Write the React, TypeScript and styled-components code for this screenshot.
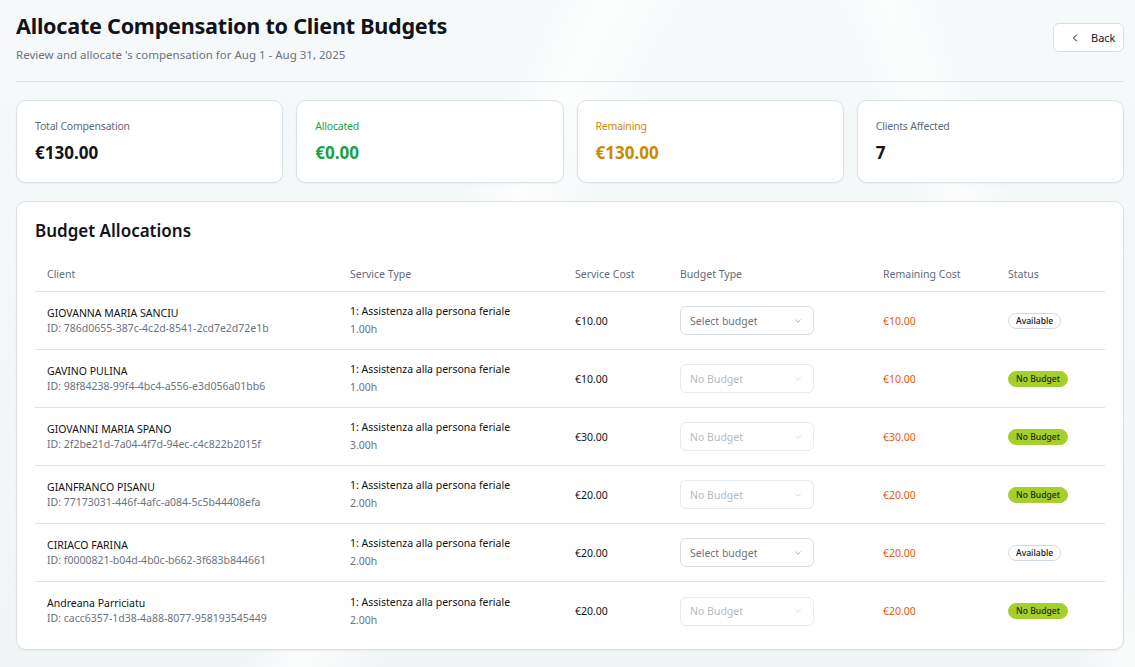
import React from "react";
import styled, { createGlobalStyle } from "styled-components";

const Global = createGlobalStyle`
  * { box-sizing: border-box; }
  html, body { margin: 0; padding: 0; }
  body {
    font-family: "Noto Sans", "Open Sans", sans-serif;
    color: #111827;
    background: #f3f6f7;
  }
`;

const Page = styled.div`
  min-height: 667px;
  padding: 11px 11px 18px 16px;
  background:
    linear-gradient(115deg, transparent 0%, transparent 38%, rgba(255,255,255,0.7) 42%, transparent 48%),
    linear-gradient(70deg, transparent 0%, transparent 78%, rgba(255,255,255,0.6) 82%, transparent 86%),
    linear-gradient(180deg, #f6f9fa 0%, #f1f5f6 100%);
`;

const Header = styled.header`
  display: flex;
  justify-content: space-between;
  align-items: center;
  padding-bottom: 17px;
  border-bottom: 1px solid #dde3e7;
`;

const TitleBlock = styled.div`
  display: flex;
  flex-direction: column;
  gap: 5px;
`;

const Title = styled.h1`
  margin: 0;
  font-size: 21.6px;
  line-height: 30px;
  font-weight: 700;
  color: #111418;
  letter-spacing: -0.25px;
`;

const Subtitle = styled.p`
  margin: 0;
  font-size: 11.5px;
  line-height: 18px;
  color: #6b7280;
`;

const BackButton = styled.button`
  display: flex;
  align-items: center;
  gap: 10px;
  width: 71px;
  height: 29px;
  padding: 0 0 0 15px;
  background: #ffffff;
  border: 1px solid #d8e0e6;
  border-radius: 6px;
  font-family: inherit;
  font-size: 11px;
  color: #111827;
  cursor: pointer;
`;

const StatsGrid = styled.div`
  display: grid;
  grid-template-columns: repeat(4, 1fr);
  gap: 13px;
  margin-top: 18px;
`;

const Card = styled.div`
  background: #ffffff;
  border: 1px solid #dbe2e7;
  border-radius: 10px;
  box-shadow: 0 1px 2px rgba(15, 23, 42, 0.05);
`;

const StatCard = styled(Card)`
  height: 83px;
  padding: 17px 18px;
  display: flex;
  flex-direction: column;
  gap: 7px;
`;

const tones: Record<string, string> = {
  default: "#111418",
  green: "#16a34a",
  amber: "#ca8a04",
};

const StatLabel = styled.div<{ $tone: string }>`
  font-size: 10.5px;
  line-height: 16px;
  letter-spacing: -0.2px;
  color: ${(p) => (p.$tone === "default" ? "#5f6b7a" : tones[p.$tone])};
`;

const StatValue = styled.div<{ $tone: string }>`
  font-size: 17px;
  line-height: 24px;
  font-weight: 700;
  color: ${(p) => tones[p.$tone]};
`;

const AllocCard = styled(Card)`
  margin-top: 18px;
  padding: 17px 18px 9px 18px;
`;

const SectionTitle = styled.h2`
  margin: 0;
  font-size: 17px;
  line-height: 24px;
  font-weight: 600;
  color: #111418;
`;

const Table = styled.div`
  margin-top: 13px;
  display: flex;
  flex-direction: column;
`;

const cols = "303px 225px 105px 203px 125px 1fr";

const HeadRow = styled.div`
  display: grid;
  grid-template-columns: ${cols};
  height: 36px;
  align-items: center;
  border-bottom: 1px solid #dde3e7;
`;

const HeadCell = styled.div`
  padding-left: 12px;
  font-size: 10.5px;
  color: #5f6b7a;
`;

const Row = styled.div<{ $last?: boolean }>`
  display: grid;
  grid-template-columns: ${cols};
  height: 58px;
  align-items: center;
  border-bottom: ${(p) => (p.$last ? "none" : "1px solid #dde3e7")};
`;

const Cell = styled.div`
  padding-left: 12px;
  display: flex;
  flex-direction: column;
`;

const Primary = styled.div`
  font-size: 10.5px;
  line-height: 15px;
  color: #111418;
`;

const Secondary = styled.div<{ $gap?: number }>`
  font-size: 10.5px;
  line-height: 15px;
  color: #6b7280;
  margin-top: ${(p) => p.$gap ?? 0}px;
`;

const Money = styled.div<{ $orange?: boolean }>`
  font-size: 10.5px;
  color: ${(p) => (p.$orange ? "#ea580c" : "#111418")};
`;

const Select = styled.div<{ $disabled?: boolean }>`
  width: 134px;
  height: 29px;
  display: flex;
  align-items: center;
  justify-content: space-between;
  padding: 0 10px 0 9px;
  background: #ffffff;
  border: 1px solid ${(p) => (p.$disabled ? "#e7ebef" : "#d6dde3")};
  border-radius: 6px;
  font-size: 10.5px;
  color: ${(p) => (p.$disabled ? "#b4bbc4" : "#6b7280")};
`;

const Badge = styled.span<{ $filled?: boolean }>`
  display: inline-flex;
  align-items: center;
  height: 16px;
  padding: 0 7px;
  border-radius: 999px;
  font-size: 8.6px;
  font-weight: 500;
  width: fit-content;
  background: ${(p) => (p.$filled ? "#a5cf2c" : "#ffffff")};
  border: 1px solid ${(p) => (p.$filled ? "#a5cf2c" : "#d3dbe2")};
  color: ${(p) => (p.$filled ? "#1d2b08" : "#111418")};
`;

const Chevron = ({ dir, color, size }: { dir: "left" | "down"; color: string; size: number }) => (
  <svg width={size} height={size} viewBox="0 0 24 24" fill="none" stroke={color} strokeWidth={2} strokeLinecap="round" strokeLinejoin="round">
    {dir === "left" ? <path d="m15 18-6-6 6-6" /> : <path d="m6 9 6 6 6-6" />}
  </svg>
);

const stats = [
  { label: "Total Compensation", value: "€130.00", tone: "default" },
  { label: "Allocated", value: "€0.00", tone: "green" },
  { label: "Remaining", value: "€130.00", tone: "amber" },
  { label: "Clients Affected", value: "7", tone: "default" },
];

const rows = [
  { name: "GIOVANNA MARIA SANCIU", id: "786d0655-387c-4c2d-8541-2cd7e2d72e1b", hours: "1.00h", cost: "€10.00", available: true },
  { name: "GAVINO PULINA", id: "98f84238-99f4-4bc4-a556-e3d056a01bb6", hours: "1.00h", cost: "€10.00", available: false },
  { name: "GIOVANNI MARIA SPANO", id: "2f2be21d-7a04-4f7d-94ec-c4c822b2015f", hours: "3.00h", cost: "€30.00", available: false },
  { name: "GIANFRANCO PISANU", id: "77173031-446f-4afc-a084-5c5b44408efa", hours: "2.00h", cost: "€20.00", available: false },
  { name: "CIRIACO FARINA", id: "f0000821-b04d-4b0c-b662-3f683b844661", hours: "2.00h", cost: "€20.00", available: true },
  { name: "Andreana Parriciatu", id: "cacc6357-1d38-4a88-8077-958193545449", hours: "2.00h", cost: "€20.00", available: false },
];

export default function App() {
  return (
    <>
      <Global />
      <Page>
        <Header>
          <TitleBlock>
            <Title>Allocate Compensation to Client Budgets</Title>
            <Subtitle>Review and allocate 's compensation for Aug 1 - Aug 31, 2025</Subtitle>
          </TitleBlock>
          <BackButton>
            <Chevron dir="left" color="#111418" size={12} />
            Back
          </BackButton>
        </Header>

        <StatsGrid>
          {stats.map((s) => (
            <StatCard key={s.label}>
              <StatLabel $tone={s.tone}>{s.label}</StatLabel>
              <StatValue $tone={s.tone}>{s.value}</StatValue>
            </StatCard>
          ))}
        </StatsGrid>

        <AllocCard>
          <SectionTitle>Budget Allocations</SectionTitle>
          <Table>
            <HeadRow>
              <HeadCell>Client</HeadCell>
              <HeadCell>Service Type</HeadCell>
              <HeadCell>Service Cost</HeadCell>
              <HeadCell>Budget Type</HeadCell>
              <HeadCell>Remaining Cost</HeadCell>
              <HeadCell>Status</HeadCell>
            </HeadRow>
            {rows.map((r, i) => (
              <Row key={r.id} $last={i === rows.length - 1}>
                <Cell>
                  <Primary>{r.name}</Primary>
                  <Secondary>ID: {r.id}</Secondary>
                </Cell>
                <Cell>
                  <Primary>1: Assistenza alla persona feriale</Primary>
                  <Secondary $gap={3}>{r.hours}</Secondary>
                </Cell>
                <Cell>
                  <Money>{r.cost}</Money>
                </Cell>
                <Cell>
                  <Select $disabled={!r.available}>
                    {r.available ? "Select budget" : "No Budget"}
                    <Chevron dir="down" color={r.available ? "#9aa3ad" : "#c9cfd6"} size={10} />
                  </Select>
                </Cell>
                <Cell>
                  <Money $orange>{r.cost}</Money>
                </Cell>
                <Cell>
                  {r.available ? <Badge>Available</Badge> : <Badge $filled>No Budget</Badge>}
                </Cell>
              </Row>
            ))}
          </Table>
        </AllocCard>
      </Page>
    </>
  );
}
